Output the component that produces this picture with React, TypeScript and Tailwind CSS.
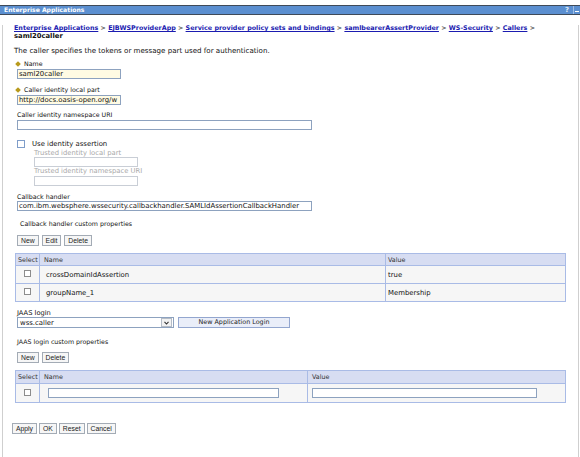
import React from "react";

const Req = () => (
  <span className="inline-block w-[4px] h-[4px] rotate-45 bg-[#b89a1c] ml-[1px] mr-[4px] align-middle" />
);

const Field = ({
  value = "",
  width,
  yellow = false,
  disabled = false,
}: {
  value?: string;
  width: string;
  yellow?: boolean;
  disabled?: boolean;
}) => (
  <div
    className={`${width} h-[10px] border overflow-hidden whitespace-nowrap px-[1px] text-[6.9px] leading-[8px] ${
      yellow ? "bg-[#fffbe3] border-[#8da2bf]" : "bg-white border-[#8da2bf]"
    } ${disabled ? "border-[#c9ced6]" : ""}`}
  >
    {value}
  </div>
);

const Btn = ({ label }: { label: string }) => (
  <button className="h-[11px] px-[3px] border border-[#a3abb5] bg-[#f6f6f6] font-['Liberation_Sans',sans-serif] text-[6.8px] leading-[9px] text-[#222]">
    {label}
  </button>
);

const Box = () => (
  <span className="inline-block w-[7px] h-[7px] border border-[#8c8c8c] bg-white" />
);

const Crumb = ({ label }: { label: string }) => (
  <span className="text-[#1b1bb0] underline font-bold">{label}</span>
);

const Sep = () => <span className="text-[#444] font-bold"> &gt; </span>;

const App = () => {
  const rows = [
    { name: "crossDomainIdAssertion", value: "true" },
    { name: "groupName_1", value: "Membership" },
  ];

  return (
    <div className="w-[580px] h-[457px] bg-white pt-[5px] font-['DejaVu_Sans',sans-serif] text-[6.3px] leading-[8px] text-[#111]">
      {/* title bar */}
      <div className="h-[10px] bg-[#5b8fd0] border-y border-[#3f4a58] flex items-center justify-between">
        <span className="pl-[4px] text-white font-bold text-[6.1px] leading-none">
          Enterprise Applications
        </span>
        <div className="flex items-center h-full">
          <span className="text-[#dfe9f7] font-bold text-[7px] leading-none pr-[4px]">?</span>
          <span className="w-[7px] h-full border-l border-[#9fbde3] flex items-center justify-center">
            <span className="w-[4px] h-[1px] bg-white mt-[2px]" />
          </span>
        </div>
      </div>

      {/* panel */}
      <div className="ml-[2px] w-[577px] h-[440px] border-x border-b border-[#cfcfcf] pl-[11px]">
        <div className="mt-[10px] whitespace-nowrap text-[6.4px] leading-[7.5px]">
          <Crumb label="Enterprise Applications" />
          <Sep />
          <Crumb label="EJBWSProviderApp" />
          <Sep />
          <Crumb label="Service provider policy sets and bindings" />
          <Sep />
          <Crumb label="samlbearerAssertProvider" />
          <Sep />
          <Crumb label="WS-Security" />
          <Sep />
          <Crumb label="Callers" />
          <Sep />
        </div>
        <div className="font-bold text-[6.8px] leading-[7.5px]">saml20caller</div>

        <p className="mt-[7px] text-[7.1px]">
          The caller specifies the tokens or message part used for authentication.
        </p>

        <div className="ml-[1px] mt-[5px] flex items-center">
          <Req />
          <span>Name</span>
        </div>
        <div className="ml-[3px] mt-[1px]">
          <Field value="saml20caller" width="w-[104px]" yellow />
        </div>

        <div className="ml-[1px] mt-[7px] flex items-center">
          <Req />
          <span>Caller identity local part</span>
        </div>
        <div className="ml-[3px] mt-[1px]">
          <Field value="http://docs.oasis-open.org/w" width="w-[104px]" yellow />
        </div>

        <div className="ml-[3px] mt-[6px]">Caller identity namespace URI</div>
        <div className="ml-[3px] mt-[1px]">
          <Field width="w-[295px]" />
        </div>

        <div className="ml-[3px] mt-[10px] flex items-center">
          <span className="inline-block w-[8px] h-[8px] border border-[#7f9dc9] bg-white" />
          <span className="ml-[7px] text-[6.9px]">Use identity assertion</span>
        </div>
        <div className="ml-[20px] text-[#a9a9a9] mt-[1px] text-[6.8px]">Trusted identity local part</div>
        <div className="ml-[20px]">
          <Field width="w-[104px]" disabled />
        </div>
        <div className="ml-[20px] text-[#a9a9a9] text-[6.8px]">Trusted identity namespace URI</div>
        <div className="ml-[20px] mt-[1px]">
          <Field width="w-[104px]" disabled />
        </div>

        <div className="ml-[3px] mt-[7px]">Callback handler</div>
        <div className="ml-[3px]">
          <Field
            value="com.ibm.websphere.wssecurity.callbackhandler.SAMLIdAssertionCallbackHandler"
            width="w-[295px]"
          />
        </div>

        <div className="ml-[6px] mt-[9px]">Callback handler custom properties</div>
        <div className="ml-[3px] mt-[7px] flex gap-[3px]">
          <Btn label="New" />
          <Btn label="Edit" />
          <Btn label="Delete" />
        </div>

        <table className="ml-[1px] mt-[7px] w-[550px] border-collapse border border-[#a9bbe6] text-[6.9px] table-fixed">
          <colgroup>
            <col className="w-[24px]" />
            <col className="w-[346px]" />
            <col className="w-[180px]" />
          </colgroup>
          <thead>
            <tr className="h-[12px] bg-[#d7ddf2] text-left text-[#333] text-[6.4px]">
              <th className="border border-[#a9bbe6] font-normal px-[2px]">Select</th>
              <th className="border border-[#a9bbe6] font-normal px-[4px]">Name</th>
              <th className="border border-[#a9bbe6] font-normal px-[2px]">Value</th>
            </tr>
          </thead>
          <tbody>
            {rows.map((r) => (
              <tr key={r.name} className="h-[18px] bg-[#f6f6f6]">
                <td className="border border-[#a9bbe6] text-center">
                  <Box />
                </td>
                <td className="border border-[#a9bbe6] px-[6px]">{r.name}</td>
                <td className="border border-[#a9bbe6] px-[2px]">{r.value}</td>
              </tr>
            ))}
          </tbody>
        </table>

        <div className="ml-[3px] mt-[7px] text-[6.7px]">JAAS login</div>
        <div className="ml-[3px] flex items-center gap-[4px]">
          <div className="w-[157px] h-[11px] border border-[#8da2bf] bg-white flex items-center">
            <span className="flex-1 px-[2px] text-[6.9px]">wss.caller</span>
            <span className="w-[11px] h-[9px] mr-[1px] border border-[#b5bcc6] bg-[#f2f2f2] flex items-center justify-center">
              <svg width="5" height="4" viewBox="0 0 5 4">
                <polyline points="0.5,0.8 2.5,3 4.5,0.8" fill="none" stroke="#333" strokeWidth="1.1" />
              </svg>
            </span>
          </div>
          <button className="w-[112px] h-[11px] border border-[#93a6cf] bg-[#eaeef9] text-[6.4px] leading-[9px] text-[#222]">
            New Application Login
          </button>
        </div>

        <div className="ml-[3px] mt-[10px]">JAAS login custom properties</div>
        <div className="ml-[3px] mt-[6px] flex gap-[3px]">
          <Btn label="New" />
          <Btn label="Delete" />
        </div>

        <table className="ml-[1px] mt-[7px] w-[550px] border-collapse border border-[#a9bbe6] text-[6.9px] table-fixed">
          <colgroup>
            <col className="w-[24px]" />
            <col className="w-[268px]" />
            <col className="w-[258px]" />
          </colgroup>
          <thead>
            <tr className="h-[13px] bg-[#d7ddf2] text-left text-[#333] text-[6.4px]">
              <th className="border border-[#a9bbe6] font-normal px-[2px]">Select</th>
              <th className="border border-[#a9bbe6] font-normal px-[4px]">Name</th>
              <th className="border border-[#a9bbe6] font-normal px-[4px]">Value</th>
            </tr>
          </thead>
          <tbody>
            <tr className="h-[19px] bg-[#f6f6f6]">
              <td className="border border-[#a9bbe6] text-center">
                <Box />
              </td>
              <td className="border border-[#a9bbe6] px-[8px]">
                <Field width="w-[231px]" />
              </td>
              <td className="border border-[#a9bbe6] px-[4px]">
                <Field width="w-[225px]" />
              </td>
            </tr>
          </tbody>
        </table>

        <div className="-ml-[2px] mt-[20px] flex gap-[2px]">
          <Btn label="Apply" />
          <Btn label="OK" />
          <Btn label="Reset" />
          <Btn label="Cancel" />
        </div>
      </div>
    </div>
  );
};

export default App;
